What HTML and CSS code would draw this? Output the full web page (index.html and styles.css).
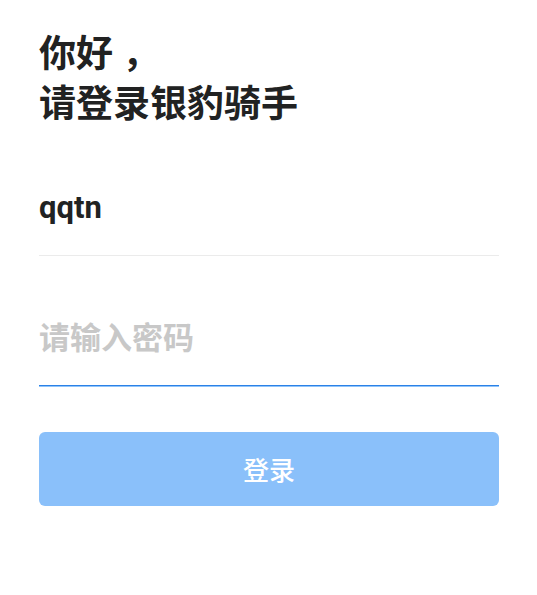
FILE: index.html
```html
<!DOCTYPE html>
<html lang="zh-CN">
<head>
<meta charset="utf-8">
<meta name="viewport" content="width=device-width, initial-scale=1">
<title>登录</title>
<link rel="stylesheet" href="styles.css">
</head>
<body>
<main class="login">
  <h1 class="title">你好<span class="comma">，</span><br>请登录银豹骑手</h1>
  <form class="form">
    <input class="field" type="text" value="qqtn" aria-label="账号">
    <input class="field field-active" type="password" placeholder="请输入密码" aria-label="密码">
    <button class="submit" type="submit">登录</button>
  </form>
</main>
</body>
</html>
```

FILE: styles.css
```css
* {
  box-sizing: border-box;
}

body {
  margin: 0;
  background: #fff;
  color: #212222;
  font-family: Roboto, "Noto Sans CJK SC", sans-serif;
}

.login {
  padding: 30px 38px 40px 39px;
}

.title {
  margin: 0;
  font-size: 37px;
  line-height: 50px;
  font-weight: 700;
}

/* Half-width comma centred in a full-width cell */
.comma {
  display: inline-block;
  width: 1em;
  text-align: center;
  font-feature-settings: "halt";
}

.form {
  display: flex;
  flex-direction: column;
  margin-top: 30px;
}

.field {
  width: 100%;
  height: 96px;
  padding: 0;
  border: 0;
  border-bottom: 1px solid #ebebeb;
  border-radius: 0;
  outline: 0;
  background: transparent;
  color: inherit;
  font: 700 31px/40px Roboto, "Noto Sans CJK SC", sans-serif;
}

.field-active {
  height: 98px;
  margin-top: 32px;
  padding-top: 4px;
  border-bottom-color: #2b81e6;
  box-shadow: 0 1px #8fc4fb;
}

.field::placeholder {
  color: #c8c8c8;
  opacity: 1;
}

.submit {
  height: 74px;
  margin-top: 46px;
  padding: 4px 0 0;
  border: 0;
  border-radius: 6px;
  background: #8ac0fa;
  color: #fff;
  font: 500 26px/36px Roboto, "Noto Sans CJK SC", sans-serif;
}
```
